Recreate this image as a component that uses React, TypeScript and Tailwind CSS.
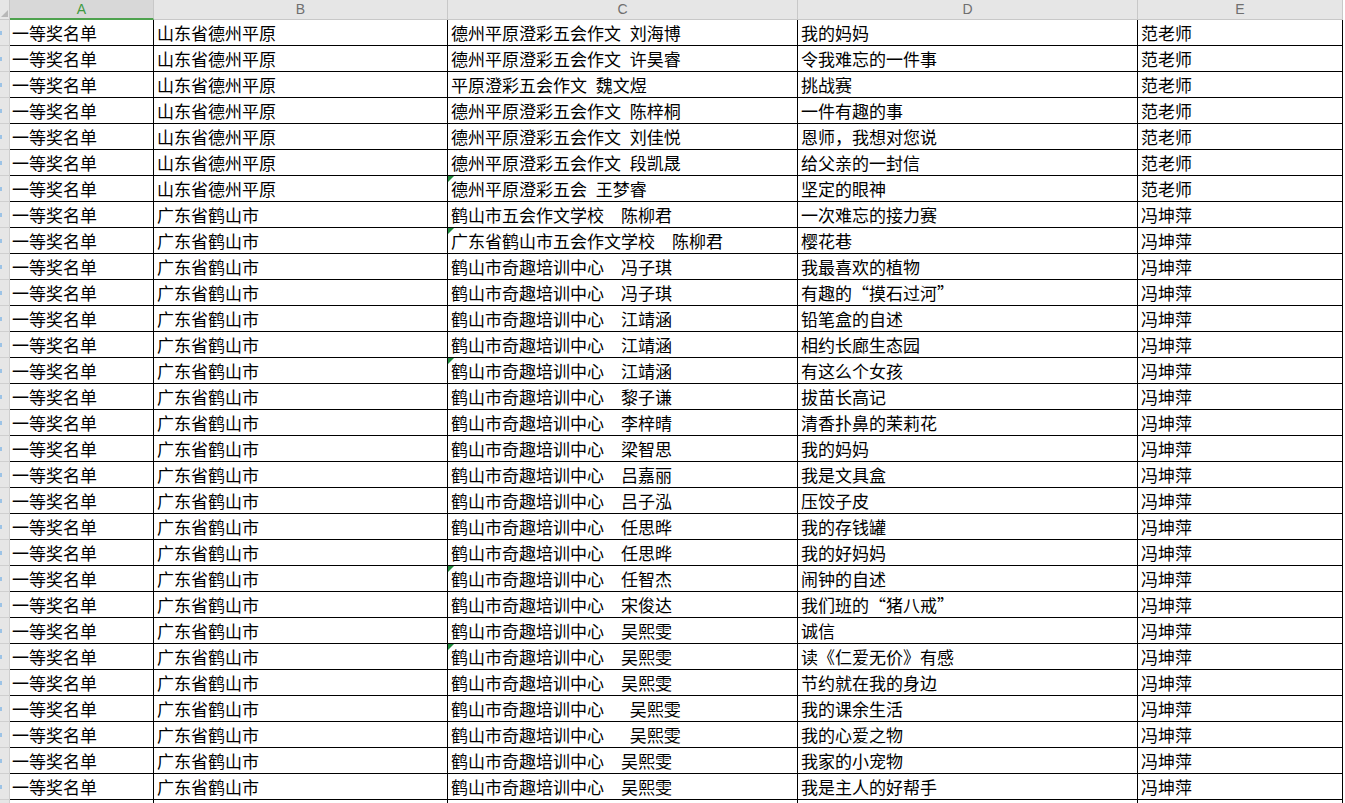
import React from "react";

type Row = [string, string, string, string, string, boolean?];

const S = "山东省德州平原";
const G = "广东省鹤山市";
const Q = "鹤山市奇趣培训中心　";
const F = "范老师";
const P = "冯坤萍";

const rows: Row[] = [
  ["一等奖名单", S, "德州平原澄彩五会作文 刘海博", "我的妈妈", F],
  ["一等奖名单", S, "德州平原澄彩五会作文 许昊睿", "令我难忘的一件事", F],
  ["一等奖名单", S, "平原澄彩五会作文 魏文煜", "挑战赛", F],
  ["一等奖名单", S, "德州平原澄彩五会作文 陈梓桐", "一件有趣的事", F],
  ["一等奖名单", S, "德州平原澄彩五会作文 刘佳悦", "恩师，我想对您说", F],
  ["一等奖名单", S, "德州平原澄彩五会作文 段凯晟", "给父亲的一封信", F],
  ["一等奖名单", S, "德州平原澄彩五会 王梦睿", "坚定的眼神", F, true],
  ["一等奖名单", G, "鹤山市五会作文学校　陈柳君", "一次难忘的接力赛", P],
  ["一等奖名单", G, "广东省鹤山市五会作文学校　陈柳君", "樱花巷", P, true],
  ["一等奖名单", G, Q + "冯子琪", "我最喜欢的植物", P],
  ["一等奖名单", G, Q + "冯子琪", "有趣的“摸石过河”", P],
  ["一等奖名单", G, Q + "江靖涵", "铅笔盒的自述", P],
  ["一等奖名单", G, Q + "江靖涵", "相约长廊生态园", P],
  ["一等奖名单", G, Q + "江靖涵", "有这么个女孩", P, true],
  ["一等奖名单", G, Q + "黎子谦", "拔苗长高记", P],
  ["一等奖名单", G, Q + "李梓晴", "清香扑鼻的茉莉花", P],
  ["一等奖名单", G, Q + "梁智思", "我的妈妈", P],
  ["一等奖名单", G, Q + "吕嘉丽", "我是文具盒", P],
  ["一等奖名单", G, Q + "吕子泓", "压饺子皮", P],
  ["一等奖名单", G, Q + "任思晔", "我的存钱罐", P],
  ["一等奖名单", G, Q + "任思晔", "我的好妈妈", P],
  ["一等奖名单", G, Q + "任智杰", "闹钟的自述", P, true],
  ["一等奖名单", G, Q + "宋俊达", "我们班的“猪八戒”", P],
  ["一等奖名单", G, Q + "吴熙雯", "诚信", P],
  ["一等奖名单", G, Q + "吴熙雯", "读《仁爱无价》有感", P, true],
  ["一等奖名单", G, Q + "吴熙雯", "节约就在我的身边", P],
  ["一等奖名单", G, Q + " 吴熙雯", "我的课余生活", P],
  ["一等奖名单", G, Q + " 吴熙雯", "我的心爱之物", P],
  ["一等奖名单", G, Q + "吴熙雯", "我家的小宠物", P],
  ["一等奖名单", G, Q + "吴熙雯", "我是主人的好帮手", P],
];

const cell =
  "relative h-[26px] border-b border-r border-black flex items-center whitespace-pre overflow-hidden text-[17px] leading-none text-black [word-spacing:5px]";

export default function App() {
  return (
    <div
      className="h-screen w-screen overflow-hidden bg-white"
      style={{ fontFamily: '"Noto Sans CJK SC", "Noto Sans", sans-serif' }}
    >
      <div className="grid grid-cols-[10px_144px_294px_350px_340px_205px] w-[1343px]">
        <div className="relative h-[20px] bg-[#e6e6e6] border-b border-r border-[#c8c8c8]">
          <div className="absolute right-[1px] bottom-[2px] w-0 h-0 border-l-[7px] border-l-transparent border-b-[7px] border-b-[#b8b8b8]" />
        </div>
        {["A", "B", "C", "D", "E"].map((l, i) => (
          <div
            key={l}
            className={
              i === 0
                ? "h-[20px] bg-[#d8d8d8] border-b-2 border-b-[#4ea24e] border-r border-r-[#c8c8c8] flex items-center justify-center text-[14px] text-[#3f9a3f]"
                : "h-[20px] bg-[#e6e6e6] border-b border-r border-[#c8c8c8] flex items-center justify-center text-[14px] text-[#6f6f6f]"
            }
            style={{ fontFamily: '"Liberation Sans", Arial, sans-serif' }}
          >
            {l}
          </div>
        ))}
        {rows.map((r, i) => (
          <React.Fragment key={i}>
            <div className="h-[26px] bg-[#e6e6e6] border-b border-r border-[#cfcfcf] flex items-center">
              <div className="w-[2px] h-[4px] bg-[#9cc3e6]" />
            </div>
            <div className={cell + " pl-[2px]"}>{r[0]}</div>
            <div className={cell + " pl-[3px]"}>{r[1]}</div>
            <div className={cell + " pl-[3px]"}>
              {r[5] && (
                <div className="absolute left-0 top-0 w-0 h-0 border-t-[6px] border-t-[#1e8a3c] border-r-[6px] border-r-transparent" />
              )}
              {r[2]}
            </div>
            <div className={cell + " pl-[3px]"}>{r[3]}</div>
            <div className={cell + " pl-[3px]"}>{r[4]}</div>
          </React.Fragment>
        ))}
        <div className="h-[26px] bg-[#e6e6e6] border-r border-[#cfcfcf]" />
        <div className="h-[26px] border-r border-black" />
        <div className="h-[26px] border-r border-black" />
        <div className="h-[26px] border-r border-black" />
        <div className="h-[26px] border-r border-black" />
        <div className="h-[26px] border-r border-black" />
      </div>
    </div>
  );
}
